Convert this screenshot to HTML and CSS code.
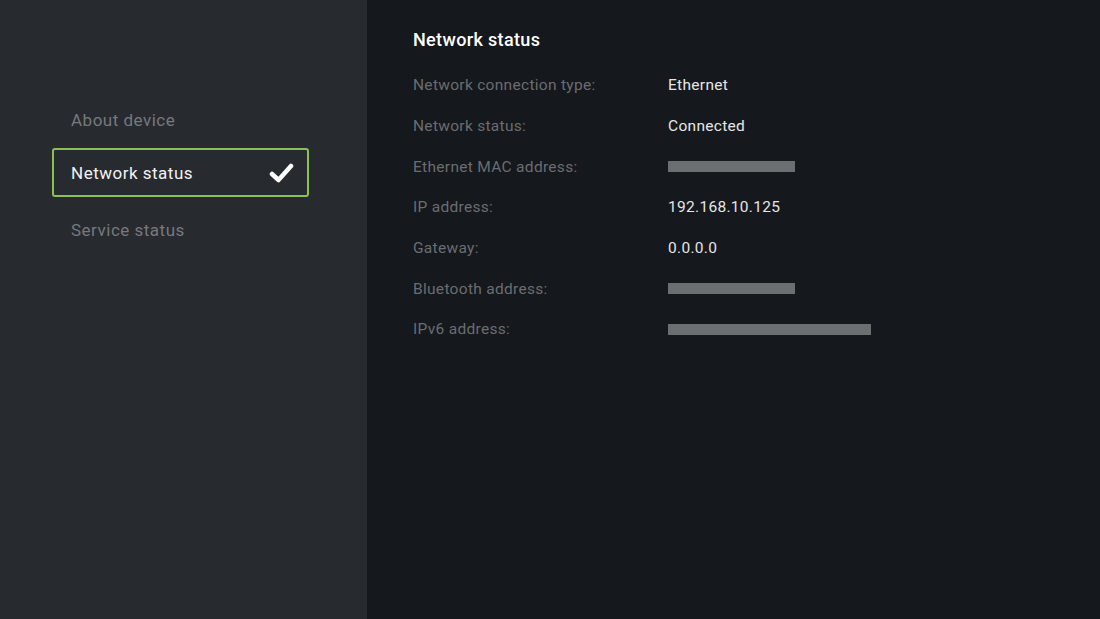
FILE: index.html
```html
<!DOCTYPE html>
<html>
<head>
<meta charset="utf-8">
<link rel="stylesheet" href="styles.css">
</head>
<body>
<div class="app">
  <aside class="sidebar">
    <nav class="nav">
      <div class="item">About device</div>
      <div class="item active">
        <span>Network status</span>
        <svg class="check" width="26" height="22" viewBox="0 0 26 22"><path d="M3 12 L9.5 18 L22 4" fill="none" stroke="#fff" stroke-width="4.5" stroke-linecap="round" stroke-linejoin="round"/></svg>
      </div>
      <div class="item">Service status</div>
    </nav>
  </aside>
  <main class="main">
    <h1 class="title">Network status</h1>
    <div class="rows">
      <div class="row"><span class="label">Network connection type:</span><span class="value">Ethernet</span></div>
      <div class="row"><span class="label">Network status:</span><span class="value">Connected</span></div>
      <div class="row"><span class="label">Ethernet MAC address:</span><span class="bar short"></span></div>
      <div class="row"><span class="label">IP address:</span><span class="value">192.168.10.125</span></div>
      <div class="row"><span class="label">Gateway:</span><span class="value">0.0.0.0</span></div>
      <div class="row"><span class="label">Bluetooth address:</span><span class="bar short"></span></div>
      <div class="row"><span class="label">IPv6 address:</span><span class="bar long"></span></div>
    </div>
  </main>
</div>
</body>
</html>
```

FILE: styles.css
```css
html, body {
  margin: 0;
  padding: 0;
  height: 100%;
}
body {
  font-family: Roboto, "Liberation Sans", sans-serif;
  background: #15181c;
}
.app {
  display: flex;
  height: 619px;
}
.sidebar {
  width: 367px;
  background: #272a2f;
  flex-shrink: 0;
}
.nav {
  padding: 95px 0 0 52px;
  width: 257px;
}
.item {
  height: 49px;
  box-sizing: border-box;
  border: 2px solid transparent;
  border-radius: 3px;
  padding: 0 12px 0 17px;
  display: flex;
  align-items: center;
  justify-content: space-between;
  font-size: 17px;
  letter-spacing: 0.5px;
  color: #76797d;
}
.item.active {
  margin: 4px 0 8px;
  border-color: #8cc152;
  color: #f2f2f2;
}
.check {
  display: block;
}
.main {
  flex: 1;
  padding: 28px 0 0 46px;
}
.title {
  margin: 0 0 13px;
  font-size: 18px;
  font-weight: 500;
  color: #ffffff;
  letter-spacing: 0.35px;
  line-height: 24px;
}
.row {
  display: flex;
  align-items: center;
  height: 40.7px;
}
.label {
  width: 255px;
  flex-shrink: 0;
  font-size: 15.5px;
  letter-spacing: 0.3px;
  color: #6a6d71;
}
.value {
  font-size: 15.5px;
  letter-spacing: 0.3px;
  color: #e6e6e6;
}
.bar {
  height: 11px;
  background: #6b6f72;
}
.bar.short { width: 127px; }
.bar.long { width: 203px; }
```
